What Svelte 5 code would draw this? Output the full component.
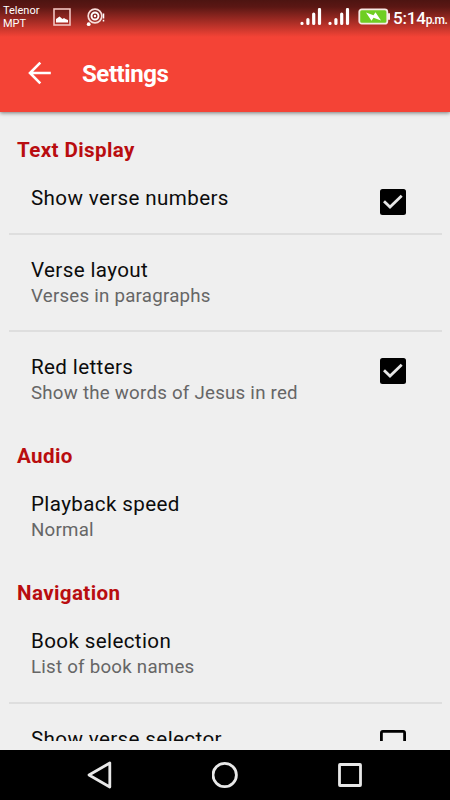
<script>
  const sections = [
    {
      name: 'Text Display',
      items: [
        { title: 'Show verse numbers', checked: true },
        { title: 'Verse layout', detail: 'Verses in paragraphs' },
        { title: 'Red letters', detail: 'Show the words of Jesus in red', checked: true }
      ]
    },
    { name: 'Audio', items: [{ title: 'Playback speed', detail: 'Normal' }] },
    {
      name: 'Navigation',
      items: [
        { title: 'Book selection', detail: 'List of book names' },
        { title: 'Show verse selector', checked: false }
      ]
    }
  ];
</script>

<div class="screen">
  <header>
    <div class="status">
      <div class="carrier"><span>Telenor</span><span>MPT</span></div>
      <svg class="photo" width="18" height="18" viewBox="0 0 18 18">
        <rect x="1" y="1" width="16" height="16" fill="none" stroke="#f0c4c0" stroke-width="1.6" />
        <path d="M3 14.5V11L4.5 10L6.5 8.5L9.5 11L11 10L12.5 11L15 12V14.5Z" fill="#fff" />
      </svg>
      <svg class="notice" width="20" height="20" viewBox="0 0 20 20">
        <circle cx="9" cy="8" r="6.8" fill="none" stroke="#f8dedb" stroke-width="1.7" />
        <circle cx="9" cy="8" r="3.5" fill="none" stroke="#fff" stroke-width="1.9" />
        <circle cx="9" cy="8" r="1.2" fill="#fff" />
        <circle cx="2.7" cy="16.2" r="1.9" fill="#fff" />
        <path d="M17.5 5.5v5M17.5 11.8v1.7" stroke="#fff" stroke-width="1.5" />
      </svg>
      <div class="right">
        {#each [0, 1] as n (n)}
          <svg width="22" height="18" viewBox="0 0 22 18">
            <path d="M2 15.3v.1M7.9 11.5v4M13.7 6v9.5M19.5 1.5v14" stroke="#fff" stroke-width="3.2" stroke-linecap="round" />
          </svg>
        {/each}
        <svg class="battery" width="33" height="18" viewBox="0 0 33 18">
          <rect x="1.3" y="1.3" width="28" height="14.4" rx="2.5" fill="#6fce22" stroke="#f7e9e6" stroke-width="1.8" />
          <rect x="30" y="5" width="2" height="7" rx="1" fill="#f7e9e6" />
          <path d="M8 4.5L15.5 7.2L17.5 4.2L23 12.5L15.5 9.8L13.5 12.8Z" fill="#fff" />
        </svg>
        <div class="clock">5:14<small>p.m.</small></div>
      </div>
    </div>
    <div class="toolbar">
      <svg width="24" height="24" viewBox="0 0 24 24" fill="none" stroke="#fff" stroke-width="2.6">
        <path d="M23.8 12H3.2M13.3 1.7L3 12L13.3 22.3" />
      </svg>
      <h1>Settings</h1>
    </div>
  </header>

  <main>
    {#each sections as section (section.name)}
      <section>
        <h2>{section.name}</h2>
        {#each section.items as item (item.title)}
          <div class="row">
            <div class="label">
              <div class="title">{item.title}</div>
              {#if item.detail}<div class="detail">{item.detail}</div>{/if}
            </div>
            {#if item.checked !== undefined}
              <svg class="box" width="26" height="26" viewBox="0 0 26 26">
                {#if item.checked}
                  <rect width="26" height="26" rx="2.5" fill="#000" />
                  <path d="M4 12.2L10 18L21.7 6.8" fill="none" stroke="#e6e6e6" stroke-width="2.8" />
                {:else}
                  <rect x="1.4" y="1.4" width="23.2" height="23.2" rx="1.5" fill="none" stroke="#000" stroke-width="2.8" />
                {/if}
              </svg>
            {/if}
          </div>
        {/each}
      </section>
    {/each}
  </main>

  <nav>
    <svg width="26" height="28" viewBox="0 0 26 28"><path d="M22.8 2V26L2 14Z" /></svg>
    <svg width="28" height="28" viewBox="0 0 28 28"><circle cx="14" cy="14" r="11.7" /></svg>
    <svg width="24" height="24" viewBox="0 0 24 24"><rect x="1.5" y="1.5" width="21" height="21" rx=".5" /></svg>
  </nav>
</div>

<style>
  .screen {
    width: 450px;
    height: 800px;
    display: flex;
    flex-direction: column;
    overflow: hidden;
    background: #efefef;
    font-family: Roboto, sans-serif;
    color: #0c0c0c;
  }
  header {
    flex: none;
    height: 112px;
    background: linear-gradient(#4d1411 0, #5b1714 7px, #f44336 37px);
    color: #fff;
    box-shadow: 0 1px 4px rgba(0, 0, 0, .5);
  }
  .status {
    height: 36px;
    display: flex;
    align-items: flex-start;
  }
  .carrier {
    width: 52.5px;
    padding: 4px 0 0 3px;
    box-sizing: border-box;
    display: flex;
    flex-direction: column;
    font-size: 11px;
    line-height: 13px;
  }
  .photo { margin-top: 8px; }
  .notice { margin: 8px 0 0 15.5px; }
  .right {
    margin-left: auto;
    display: flex;
    padding-right: 2px;
  }
  .right svg { margin: 8px 6px 0 0; }
  .right .battery { margin: 8px 2px 0 2px; }
  .clock {
    width: 55px;
    font-size: 17px;
    font-weight: 500;
    line-height: 36px;
    letter-spacing: -.2px;
    white-space: nowrap;
  }
  .clock small {
    font-size: 12px;
    letter-spacing: -.6px;
  }
  .toolbar {
    height: 74px;
    display: flex;
    align-items: center;
    padding-left: 27px;
  }
  h1 {
    margin: 2px 0 0 31px;
    font-size: 24px;
    line-height: 28px;
    font-weight: 700;
    letter-spacing: -.42px;
  }
  main {
    flex: none;
    height: 604px;
    padding: 25px 8.5px 0;
    overflow: hidden;
  }
  section + section { padding-top: 15.5px; }
  h2 {
    margin: 0 0 0 8.5px;
    font-size: 20.6px;
    line-height: 26px;
    font-weight: 700;
    letter-spacing: .38px;
    color: #b90d10;
  }
  .row {
    display: flex;
    justify-content: space-between;
    padding: 22px 35.5px 21.5px 22.5px;
  }
  .row + .row { border-top: 2px solid #dedede; }
  .title {
    font-size: 20.6px;
    line-height: 26px;
    letter-spacing: .37px;
  }
  .detail {
    font-size: 18.7px;
    line-height: 26px;
    letter-spacing: .24px;
    color: #666;
  }
  .box {
    flex: none;
    margin: 4px 0 -4px;
  }
  nav {
    height: 50px;
    margin-top: auto;
    background: #000;
    display: flex;
    align-items: center;
    justify-content: space-between;
    padding: 0 88px 0 87px;
    fill: none;
    stroke: #e8e8e8;
    stroke-width: 2.8;
    stroke-linejoin: round;
  }
  nav circle { transform: translateX(-1.3px); }
</style>
